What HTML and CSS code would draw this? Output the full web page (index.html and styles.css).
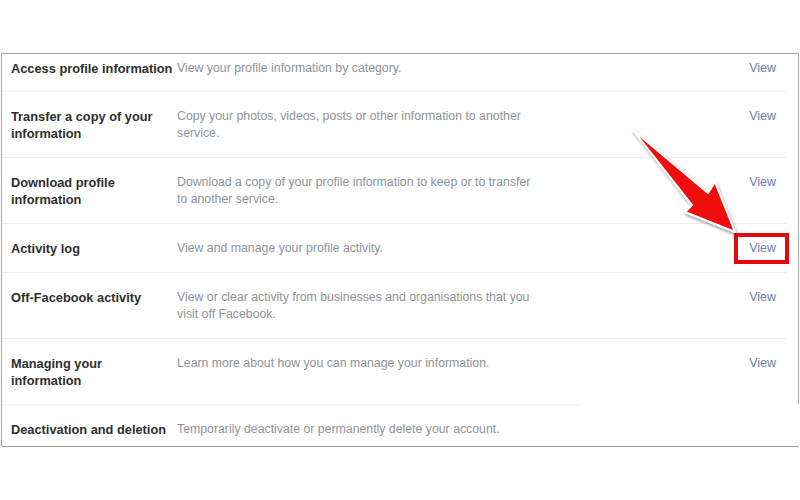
FILE: index.html
```html
<!DOCTYPE html>
<html lang="en">
<head>
  <meta charset="UTF-8">
  <title>Your Facebook information</title>
  <link rel="stylesheet" href="styles.css">
</head>
<body>
  <div class="panel">
    <div class="rows">
      <div class="row first">
        <div class="title">Access profile information</div>
        <div class="desc">View your profile information by category.</div>
        <a class="view" href="#">View</a>
      </div>
      <div class="row">
        <div class="title">Transfer a copy of your information</div>
        <div class="desc">Copy your photos, videos, posts or other information to another service.</div>
        <a class="view" href="#">View</a>
      </div>
      <div class="row">
        <div class="title">Download profile information</div>
        <div class="desc">Download a copy of your profile information to keep or to transfer to another service.</div>
        <a class="view" href="#">View</a>
      </div>
      <div class="row">
        <div class="title">Activity log</div>
        <div class="desc">View and manage your profile activity.</div>
        <a class="view marked" href="#">View</a>
      </div>
      <div class="row">
        <div class="title">Off-Facebook activity</div>
        <div class="desc">View or clear activity from businesses and organisations that you visit off Facebook.</div>
        <a class="view" href="#">View</a>
      </div>
      <div class="row nosep">
        <div class="title">Managing your information</div>
        <div class="desc">Learn more about how you can manage your information.</div>
        <a class="view" href="#">View</a>
      </div>
    </div>
    <div class="row last">
      <div class="title">Deactivation and deletion</div>
      <div class="desc wide">Temporarily deactivate or permanently delete your account.</div>
    </div>
  </div>

  <svg class="arrow" width="800" height="500" viewBox="0 0 800 500">
    <defs>
      <filter id="shadow" x="-20%" y="-20%" width="140%" height="140%">
        <feDropShadow dx="1" dy="2" stdDeviation="1.6" flood-color="#000" flood-opacity="0.45"/>
      </filter>
    </defs>
    <polygon points="633,130 708,193 715,182 735,232 685,212 692,205"
             fill="#f01010" stroke="#fff" stroke-width="2" stroke-linejoin="round" filter="url(#shadow)"/>
  </svg>
</body>
</html>
```

FILE: styles.css
```css
body {
  margin: 0;
  padding-top: 53px;
  background: #fff;
  font-family: "Liberation Sans", Arial, sans-serif;
  position: relative;
}
.panel {
  margin-left: 1px;
  width: 798px;
  box-sizing: border-box;
  border-top: 1px solid #a8a8a8;
  border-left: 1px solid #a8a8a8;
  border-bottom: 1px solid #9a9a9a;
}
.rows {
  border-right: 1px solid #a8a8a8;
}
.row {
  display: flex;
  align-items: flex-start;
  padding: 16px 10px 15px 9px;
  margin-right: 12px;
  border-bottom: 1px solid #eceef1;
  line-height: 17px;
}
.row.first {
  padding-top: 6px;
  padding-bottom: 14px;
}
.row.nosep {
  border-bottom: none;
}
.row.last {
  border-bottom: none;
  border-top: 1px solid #eceef1;
  margin-right: 219px;
  padding-bottom: 8px;
}
.title {
  flex: 0 0 166px;
  box-sizing: border-box;
  padding-right: 3px;
  font-size: 12.8px;
  font-weight: bold;
  color: #2e2e2e;
}
.desc {
  flex: 0 0 357px;
  font-size: 12.3px;
  color: #8f9399;
}
.desc.wide {
  flex-basis: 380px;
}
.view {
  margin-left: auto;
  font-size: 12.5px;
  color: #6a80b0;
  text-decoration: none;
}
.marked {
  padding: 3px 9px 3px 11px;
  margin: -3px -9px -3px auto;
  outline: 4px solid #e8060b;
}
.arrow {
  position: absolute;
  left: 0;
  top: 0;
  pointer-events: none;
}
```
